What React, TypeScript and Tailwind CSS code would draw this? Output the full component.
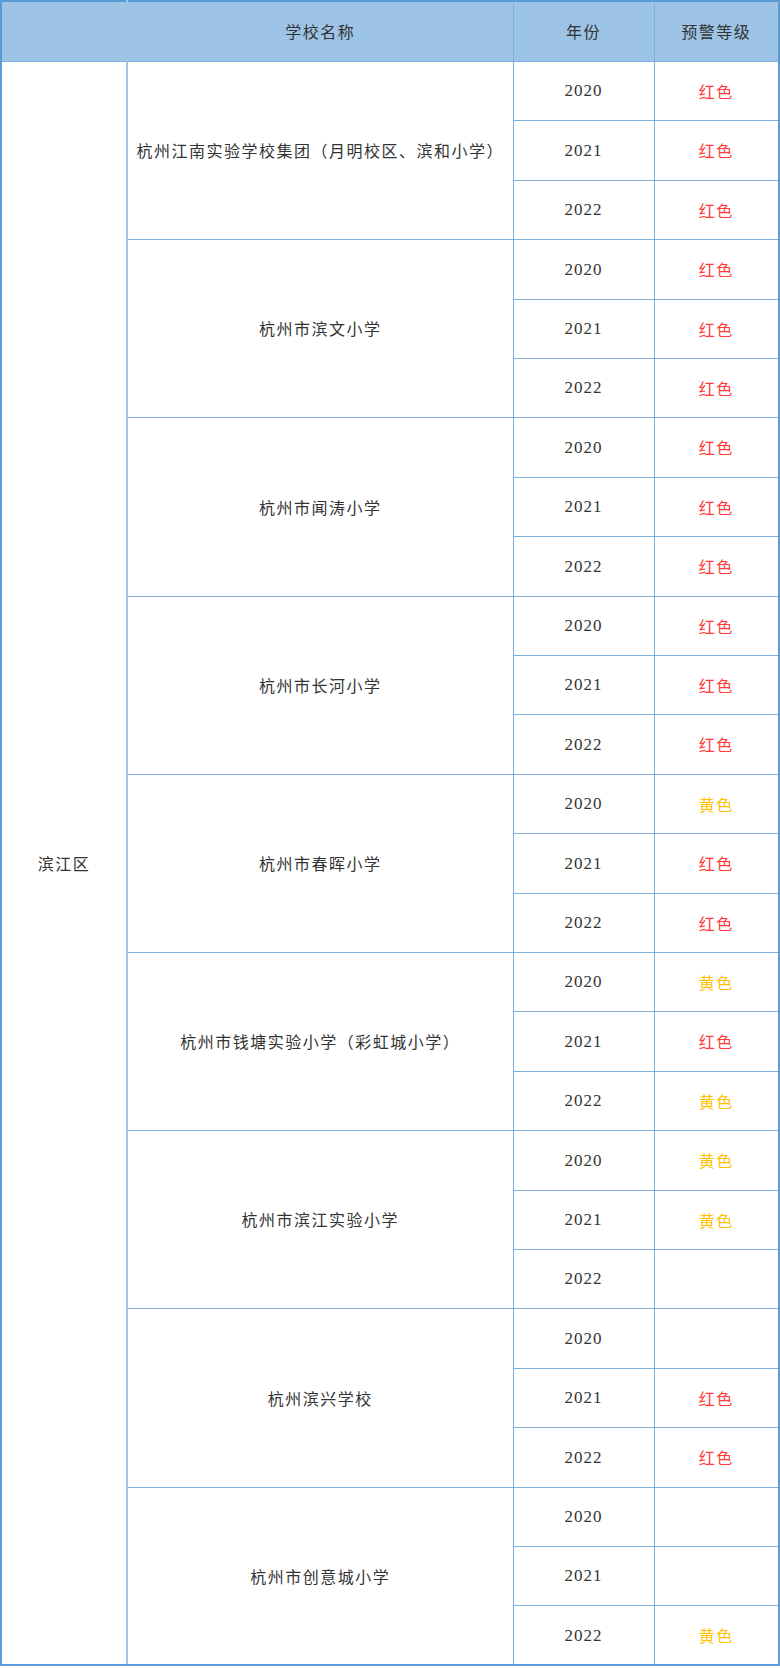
import React from 'react';

type Level = '红色' | '黄色' | '';

interface School {
  name: string;
  levels: [Level, Level, Level];
}

const schools: School[] = [
  { name: '杭州江南实验学校集团（月明校区、滨和小学）', levels: ['红色', '红色', '红色'] },
  { name: '杭州市滨文小学', levels: ['红色', '红色', '红色'] },
  { name: '杭州市闻涛小学', levels: ['红色', '红色', '红色'] },
  { name: '杭州市长河小学', levels: ['红色', '红色', '红色'] },
  { name: '杭州市春晖小学', levels: ['黄色', '红色', '红色'] },
  { name: '杭州市钱塘实验小学（彩虹城小学）', levels: ['黄色', '红色', '黄色'] },
  { name: '杭州市滨江实验小学', levels: ['黄色', '黄色', ''] },
  { name: '杭州滨兴学校', levels: ['', '红色', '红色'] },
  { name: '杭州市创意城小学', levels: ['', '', '黄色'] },
];

const years = ['2020', '2021', '2022'];

const cell = 'border border-[#7fb0e0] text-center align-middle p-0';

export default function App() {
  return (
    <div
      className="w-[780px] bg-white text-[#333] text-[16px] tracking-[1.5px]"
      style={{ fontFamily: '"Noto Sans CJK SC", sans-serif' }}
    >
      <table className="w-[778px] table-fixed border-collapse">
        <colgroup>
          <col className="w-[126px]" />
          <col className="w-[386px]" />
          <col className="w-[141px]" />
          <col className="w-[125px]" />
        </colgroup>
        <thead>
          <tr className="h-[60px] bg-[#9dc3e6]">
            <th className={`${cell} font-normal border-r-2 border-r-[#9dc3e6] border-l-2 border-l-[#5b9bd5] border-t-2 border-t-[#5b9bd5]`}></th>
            <th className={`${cell} font-normal border-t-2 border-t-[#5b9bd5]`}>学校名称</th>
            <th className={`${cell} font-normal border-t-2 border-t-[#5b9bd5]`}>年份</th>
            <th className={`${cell} font-normal border-t-2 border-t-[#5b9bd5] border-r-2 border-r-[#5b9bd5]`}>预警等级</th>
          </tr>
        </thead>
        <tbody>
          {schools.map((s, si) =>
            years.map((y, yi) => {
              const idx = si * 3 + yi;
              const last = si === 8 && yi === 2;
              return (
                <tr key={idx} className={idx % 5 === 1 || idx % 5 === 3 ? 'h-[60px]' : 'h-[59px]'}>
                  {idx === 0 && (
                    <td rowSpan={27} className={`${cell} border-r-2 border-r-[#9dc3e6] border-l-2 border-l-[#5b9bd5] border-b-2 border-b-[#5b9bd5]`}>
                      滨江区
                    </td>
                  )}
                  {yi === 0 && (
                    <td rowSpan={3} className={`${cell} ${si === 8 ? 'border-b-2 border-b-[#5b9bd5]' : ''}`}>
                      {s.name}
                    </td>
                  )}
                  <td className={`${cell} ${last ? 'border-b-2 border-b-[#5b9bd5]' : ''}`}>
                    <span className="tracking-[1px] text-[17px]" style={{ fontFamily: '"Liberation Serif", serif' }}>
                      {y}
                    </span>
                  </td>
                  <td
                    className={`${cell} border-r-2 border-r-[#5b9bd5] ${last ? 'border-b-2 border-b-[#5b9bd5]' : ''} ${
                      s.levels[yi] === '红色' ? 'text-[#ff3b3b]' : 'text-[#ffc000]'
                    }`}
                  >
                    {s.levels[yi]}
                  </td>
                </tr>
              );
            })
          )}
        </tbody>
      </table>
    </div>
  );
}
